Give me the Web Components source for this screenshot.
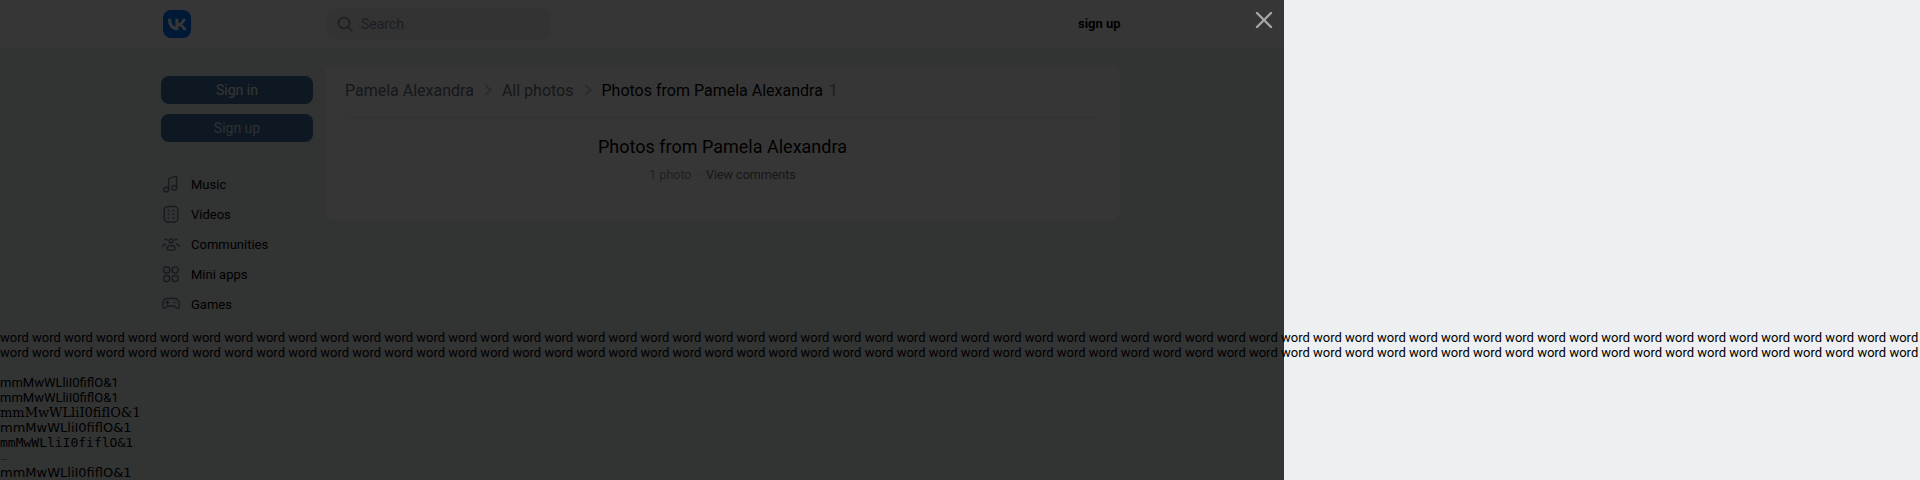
<!DOCTYPE html>
<html lang="en">
<head>
<meta charset="utf-8">
<title>Photos from Pamela Alexandra</title>
<style>
    html, body { margin: 0; padding: 0; }
    body {
        background: #edeff0;
        color: #000;
        font: 13px/15px Roboto, sans-serif;
        height: 480px;
        overflow: hidden;
        position: relative;
    }
</style>
</head>
<body>
<vk-header></vk-header>
<div style="display:flex;align-items:flex-start;gap:12px;padding:17px 0 0 161px;height:282px;box-sizing:border-box">
    <vk-sidebar></vk-sidebar>
    <vk-photos></vk-photos>
</div>
<font-probe></font-probe>
<vk-overlay></vk-overlay>

<template id="header-tpl">
    <style>
        :host {
            display: flex; align-items: center; width: 1284px; height: 48px;
            box-sizing: border-box; background: #fff; padding-left: 163px;
        }
        svg { display: block; }
        .search {
            display: flex; align-items: center; gap: 8px;
            width: 224px; height: 32px; margin-left: 136px; padding-left: 10px;
            box-sizing: border-box; background: #f0f2f5; border-radius: 8px;
            color: #818c99; font: 14px Roboto, sans-serif;
        }
        .signup { margin: 0 0 2px 527px; font: 700 13px Roboto, sans-serif; color: #000; }
    </style>
    <svg width="28" height="28" viewBox="0 0 28 28">
        <rect width="28" height="28" rx="8" fill="#07f"/>
        <path d="M14.9 20.2C8.6 20.2 5 15.9 4.9 8.7h3.2c.1 5.3 2.4 7.5 4.3 8V8.7h3v4.6c1.9-.2 3.8-2.3 4.5-4.6h3c-.5 2.8-2.6 4.9-4.1 5.8 1.5.7 3.9 2.5 4.8 5.7h-3.3c-.7-2.2-2.5-3.9-4.9-4.1v4.1z" fill="#fff"/>
    </svg>
    <div class="search">
        <svg width="16" height="16" viewBox="0 0 16 16" fill="none" stroke="#818c99" stroke-width="1.5" stroke-linecap="round">
            <circle cx="7" cy="7" r="5.5"/><path d="M11 11l4 4"/>
        </svg>
        <span>Search</span>
    </div>
    <a class="signup">sign up</a>
</template>

<template id="sidebar-tpl">
    <style>
        :host { display: block; width: 152px; margin-top: 11px; font: 13px Roboto, sans-serif; }
        .btn {
            display: flex; align-items: center; justify-content: center;
            height: 28px; margin-bottom: 10px; border-radius: 8px;
            background: #44709f; color: #fff; font-size: 14px;
        }
        .btn.alt { color: #cfe0f5; }
        ul { list-style: none; margin: 27px 0 0; padding: 0; }
        li { display: flex; align-items: center; gap: 11px; height: 30px; padding-left: 1px; color: #000; }
        svg { display: block; flex: none; fill: none; stroke: #6a7d94; stroke-width: 1.4; stroke-linecap: round; stroke-linejoin: round; }
        .dots { stroke-width: 2; }
    </style>
    <div class="btn">Sign in</div>
    <div class="btn alt">Sign up</div>
    <ul>
        <li>
            <svg width="18" height="18" viewBox="0 0 18 18"><circle cx="4.2" cy="14.6" r="2.4"/><circle cx="12.2" cy="12.8" r="2.4"/><path d="M6.6 14.6V4.5c0-.7.4-1.2 1-1.4l5.6-1.7c.7-.2 1.4.3 1.4 1v10.4"/></svg>
            Music
        </li>
        <li>
            <svg width="18" height="18" viewBox="0 0 18 18"><rect x="2.2" y="1.5" width="13.6" height="15.5" rx="3.5"/><path class="dots" d="M6.5 5.5v.01M11.5 5.5v.01M6.5 9.2v.01M11.5 9.2v.01M6.5 13v.01M11.5 13v.01"/></svg>
            Videos
        </li>
        <li>
            <svg width="18" height="18" viewBox="0 0 18 18"><circle cx="9" cy="6" r="2"/><path d="M4.8 14.2c0-2.4 1.9-3.7 4.2-3.7s4.2 1.3 4.2 3.7c0 1.3-8.4 1.3-8.4 0z"/><path d="M3 4.3a1.700 1.700 0 0 1 2 .8M15 4.3a1.700 1.700 0 0 0-2 .8M.8 11.500c.2-1.400 1.300-2.300 2.700-2.300M17.200 11.500c-.2-1.400-1.300-2.300-2.700-2.300"/></svg>
            Communities
        </li>
        <li>
            <svg width="18" height="18" viewBox="0 0 18 18"><rect x="1.7" y="2" width="6" height="6" rx="2"/><circle cx="13.2" cy="5" r="3.1"/><rect x="1.7" y="10.5" width="6" height="6" rx="2.4"/><rect x="10.2" y="10.5" width="6" height="6" rx="2.4"/></svg>
            Mini apps
        </li>
        <li>
            <svg width="18" height="18" viewBox="0 0 18 18"><path d="M5 3.5h8c2.5 0 3.8 2 4.2 5 .3 2.5 0 5-1.7 5-1.5 0-2.3-2.5-3.5-2.5H6c-1.2 0-2 2.5-3.5 2.5-1.7 0-2-2.5-1.7-5 .4-3 1.7-5 4.2-5z"/><path d="M4 7.5h3M5.5 6v3M12 7.5h.01M14 7.5h.01"/></svg>
            Games
        </li>
    </ul>
</template>

<template id="photos-tpl">
    <style>
        :host {
            display: block; width: 795px; height: 155px;
            background: #fff; border-radius: 8px; font-family: Roboto, sans-serif;
        }
        .crumbs {
            display: flex; align-items: center; height: 50px; margin: 0 20px 2px;
            font-size: 16px; color: #626d7a;
        }
        .crumbs svg { margin: 0 10px; fill: none; stroke: #aeb7c2; stroke-width: 1.3; }
        .crumbs b { font-weight: 400; color: #000; }
        .crumbs i { font-style: normal; margin-left: 6px; color: #818c99; }
        .line { height: 1px; margin: 0 22px; background: #e7e8ec; }
        .head { text-align: center; padding-top: 17px; }
        h1 { margin: 0; font-size: 18px; line-height: 24px; font-weight: 400; color: #000; }
        .sub { margin-top: 8px; font-size: 12.5px; line-height: 15px; color: #939ba3; }
        .sub a { color: #626d7a; }
        .sub s { text-decoration: none; margin: 0 2.5px; color: #aeb7c2; }
    </style>
    <div class="crumbs">
        <span>Pamela Alexandra</span>
        <svg width="8" height="12" viewBox="0 0 8 12"><path d="M1 1l6 5-6 5"/></svg>
        <span>All photos</span>
        <svg width="8" height="12" viewBox="0 0 8 12"><path d="M1 1l6 5-6 5"/></svg>
        <b>Photos from Pamela Alexandra</b><i>1</i>
    </div>
    <div class="line"></div>
    <div class="head">
        <h1>Photos from Pamela Alexandra</h1>
        <div class="sub">1 photo <s>·</s> <a>View comments</a></div>
    </div>
</template>

<template id="probe-tpl">
    <style>
        :host { display: block; font: 13px/15px Roboto, sans-serif; color: #000; }
        div { white-space: nowrap; }
        .words { margin-bottom: 15px; white-space: normal; }
        .dash { height: 15px; font-size: 9px; line-height: 21px; opacity: .6; }
    </style>
    <div class="words"></div>
    <div>mmMwWLliI0fiflO&amp;1</div>
    <div>mmMwWLliI0fiflO&amp;1</div>
    <div style="font-family:'DejaVu Serif',serif">mmMwWLliI0fiflO&amp;1</div>
    <div style="font-family:'DejaVu Sans',sans-serif">mmMwWLliI0fiflO&amp;1</div>
    <div style="font-family:'DejaVu Sans Mono',monospace">mmMwWLliI0fiflO&amp;1</div>
    <div class="dash">—</div>
    <div style="font-family:'DejaVu Sans',sans-serif">mmMwWLliI0fiflO&amp;1</div>
</template>

<template id="overlay-tpl">
    <style>
        :host { position: absolute; left: 0; top: 0; width: 1284px; height: 480px; background: rgba(0,0,0,.79); }
        svg { position: absolute; left: 1255px; top: 11px; }
    </style>
    <svg width="18" height="18" viewBox="0 0 18 18" fill="none" stroke="#a6a6a6" stroke-width="2.4" stroke-linecap="round">
        <path d="M2 2l14 14M16 2L2 16"/>
    </svg>
</template>

<script>
    // every element just clones its template into an open shadow root
    function simpleElement(tag, tplId, setup) {
        customElements.define(tag, class extends HTMLElement {
            connectedCallback() {
                this.attachShadow({ mode: 'open' });
                this.shadowRoot.appendChild(document.getElementById(tplId).content.cloneNode(true));
                if (setup) setup(this.shadowRoot);
            }
        });
    }

    simpleElement('vk-header', 'header-tpl');
    simpleElement('vk-sidebar', 'sidebar-tpl');
    simpleElement('vk-photos', 'photos-tpl');
    simpleElement('vk-overlay', 'overlay-tpl');
    simpleElement('font-probe', 'probe-tpl', (root) => {
        root.querySelector('.words').textContent = 'word '.repeat(120);
    });
</script>
</body>
</html>
